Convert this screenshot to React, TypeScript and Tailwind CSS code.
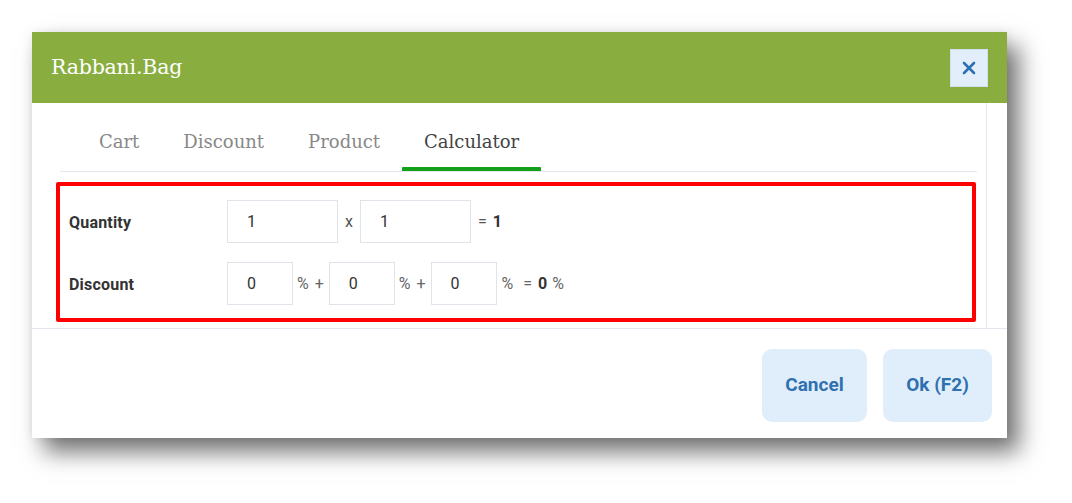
import React, { useState } from 'react';

const tabs = ['Cart', 'Discount', 'Product', 'Calculator'];

const serif = { fontFamily: '"DejaVu Serif", "Liberation Serif", serif' };

const NumBox = ({ value, width }: { value: string; width: string }) => (
  <div
    className={`${width} h-[43px] border border-[#dfe3ea] bg-white flex items-center pl-[19px] text-[16px] text-[#333]`}
  >
    {value}
  </div>
);

// "% +" between discount boxes
const PlusPct = () => (
  <span className="ml-[4px] mr-[5px] flex gap-[6px] text-[16px] text-[#666]">
    <span>%</span>
    <span>+</span>
  </span>
);

const CalculatorDialog: React.FC = () => {
  const [active, setActive] = useState('Calculator');

  return (
    <div className="min-h-screen bg-white pl-[32px] pt-[32px]" style={{ fontFamily: 'Roboto, "Liberation Sans", sans-serif' }}>
      <div className="w-[975px] h-[406px] bg-white flex flex-col shadow-[12px_14px_22px_rgba(0,0,0,0.55),0_0_10px_rgba(0,0,0,0.08)]">
        {/* Header */}
        <div className="h-[71px] bg-[#8aad40] flex items-center justify-between pl-[19px] pr-[19px]">
          <h2 className="text-white text-[20.5px] tracking-[-0.2px]" style={serif}>
            Rabbani.Bag
          </h2>
          <button className="w-[38px] h-[38px] bg-[#e2effb] border border-[#cfe0ef] flex items-center justify-center">
            <svg width="14" height="14" viewBox="0 0 14 14">
              <path d="M2 2 L12 12 M12 2 L2 12" stroke="#2f70b0" strokeWidth="2.6" strokeLinecap="round" />
            </svg>
          </button>
        </div>

        {/* Body */}
        <div className="ml-[24px] mr-[20px] border-r border-[#e3e6ec] pb-[6px]">
          <div className="ml-[4px] mr-[9px] border-b border-[#e3e6ec] h-[69px] flex items-end pl-[17px]">
            {tabs.map((t) => (
              <button
                key={t}
                onClick={() => setActive(t)}
                className={`h-full px-[22px] flex items-center text-[18px] relative ${
                  active === t ? 'text-[#444]' : 'text-[#888]'
                }`}
                style={serif}
              >
                <span className="mt-[9px]">{t}</span>
                {active === t && (
                  <span className="absolute left-0 right-0 bottom-0 h-[4px] bg-[#12a019] rounded-t-[1px]" />
                )}
              </button>
            ))}
          </div>

          <div className="mt-[10px] mr-[10px] border-[4px] border-[#ff0000] rounded-[2px] pt-[14px] pb-[13px] pl-[9px] flex flex-col gap-[19px]">
            <div className="flex items-center">
              <div className="w-[158px] text-[16px] font-bold text-[#333] tracking-[0.2px] mt-[2px]">Quantity</div>
              <NumBox value="1" width="w-[111px]" />
              <span className="mx-[7px] text-[16px] text-[#555]">x</span>
              <NumBox value="1" width="w-[111px]" />
              <span className="ml-[7px] flex gap-[6px] text-[16px] text-[#555]">
                <span>=</span>
                <b className="text-[#333]">1</b>
              </span>
            </div>
            <div className="flex items-center">
              <div className="w-[158px] text-[16px] font-bold text-[#333] tracking-[0.2px] mt-[2px]">Discount</div>
              <NumBox value="0" width="w-[66px]" />
              <PlusPct />
              <NumBox value="0" width="w-[66px]" />
              <PlusPct />
              <NumBox value="0" width="w-[66px]" />
              <span className="ml-[5px] flex text-[16px] text-[#666]">
                <span>%</span>
                <span className="ml-[10px]">=</span>
                <b className="ml-[6px] text-[#333]">0</b>
                <span className="ml-[5px]">%</span>
              </span>
            </div>
          </div>
        </div>

        {/* Footer */}
        <div className="flex-1 border-t border-[#e3e6ec] flex justify-end items-start pt-[20px] pr-[15px] gap-[16px]">
          <button className="w-[105px] h-[73px] rounded-[10px] bg-[#e0eefb] text-[#2f70b0] text-[19px] font-bold">
            Cancel
          </button>
          <button className="w-[109px] h-[73px] rounded-[10px] bg-[#e0eefb] text-[#2f70b0] text-[19px] font-bold">
            Ok (F2)
          </button>
        </div>
      </div>
    </div>
  );
};

export default CalculatorDialog;
